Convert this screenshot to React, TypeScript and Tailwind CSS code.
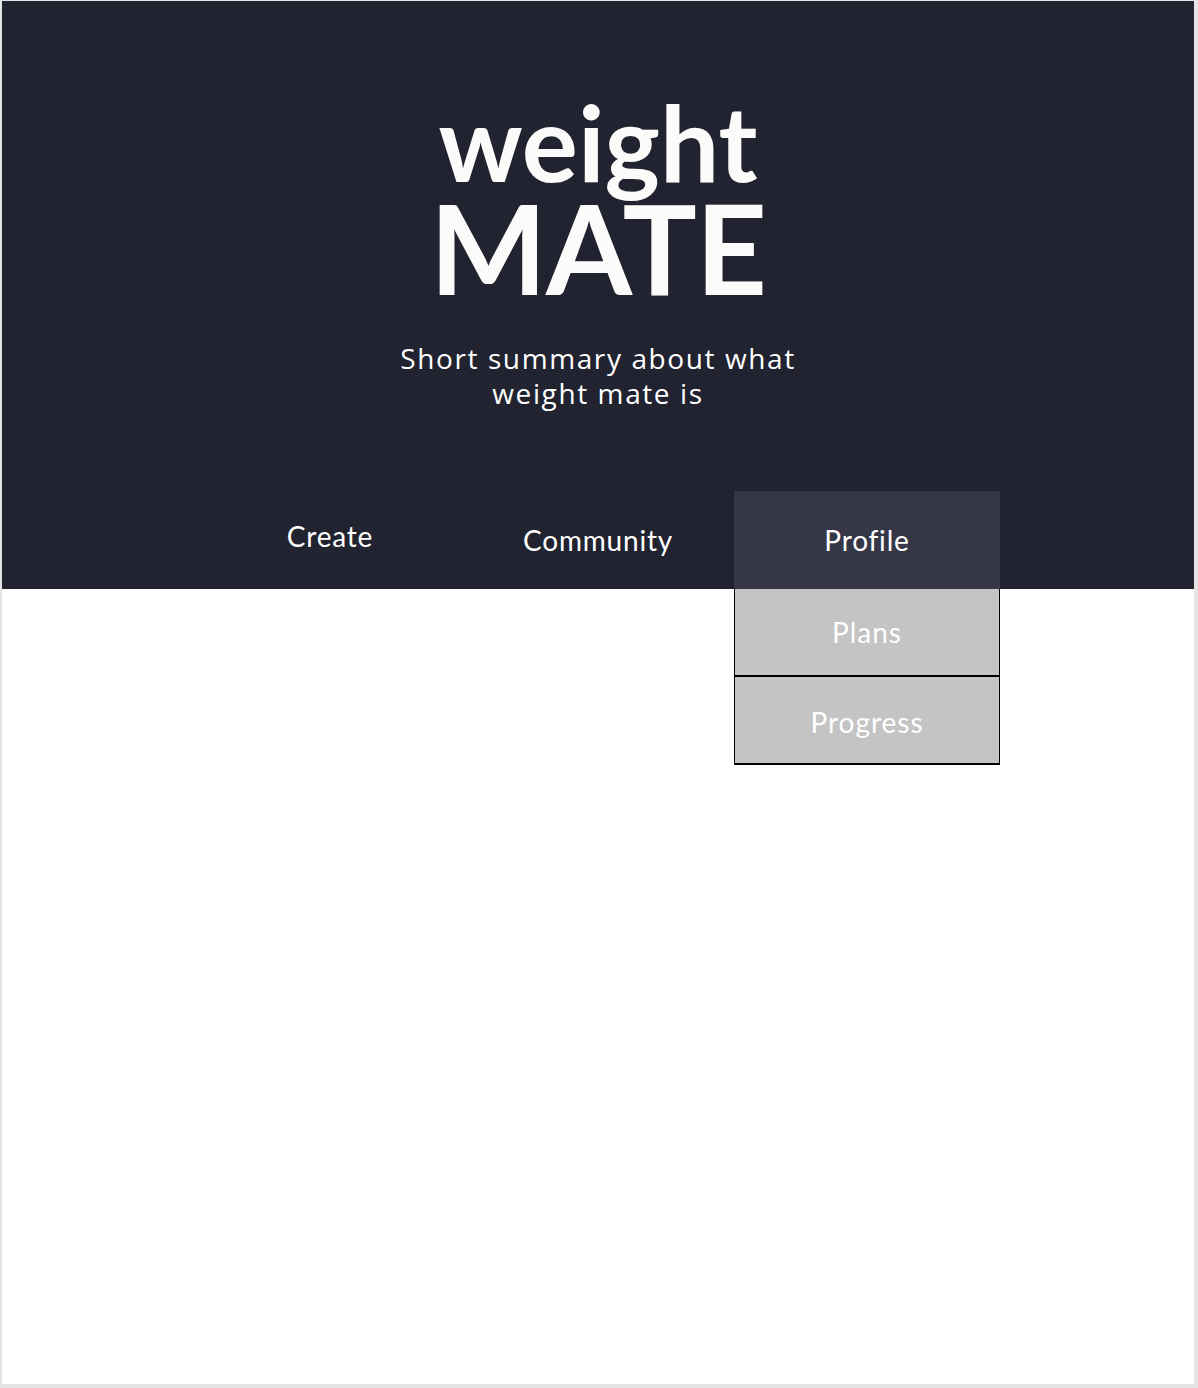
import React from "react";

export default function App() {
  const raleway = { fontFamily: "Lato, 'Open Sans', sans-serif" };
  return (
    <div className="w-[1198px] h-[1388px] bg-[#e5e5e5] pt-px pl-[2px] pr-[4px] pb-[4px]">
      <div className="w-full h-full bg-white">
        <header className="relative h-[588px] bg-[#222330] flex flex-col items-center">
          <div
            className="flex flex-col items-center text-[#fdfafa] font-bold mt-[92px]"
            style={raleway}
          >
            <div className="text-[105px] leading-[96px] tracking-[0px]">weight</div>
            <div className="text-[124px] leading-[104px] tracking-[-1px] mt-[6px]">MATE</div>
          </div>
          <p
            className="mt-[42px] text-center text-white text-[28px] leading-[35px] w-[440px] tracking-[1.6px]"
            style={{ fontFamily: "'Open Sans', Lato, sans-serif" }}
          >
            Short summary about what weight mate is
          </p>
          <nav className="mt-auto flex justify-center h-[98px] text-white text-[28px] tracking-[0.8px]" style={raleway}>
            <div className="w-[268px] flex items-center justify-center pb-[8px]">Create</div>
            <div className="w-[268px] flex items-center justify-center">Community</div>
            <div className="relative ml-[2px] w-[266px] bg-[#353748] flex items-center justify-center">
              Profile
              <div className="absolute left-0 top-full w-[266px] border-x border-b-2 border-black bg-[#c4c4c4] text-white text-[28px] tracking-[1px]">
                <div className="h-[88px] flex items-center justify-center border-b-2 border-black">Plans</div>
                <div className="h-[86px] flex items-center justify-center pt-[4px]">Progress</div>
              </div>
            </div>
          </nav>
        </header>
      </div>
    </div>
  );
}
